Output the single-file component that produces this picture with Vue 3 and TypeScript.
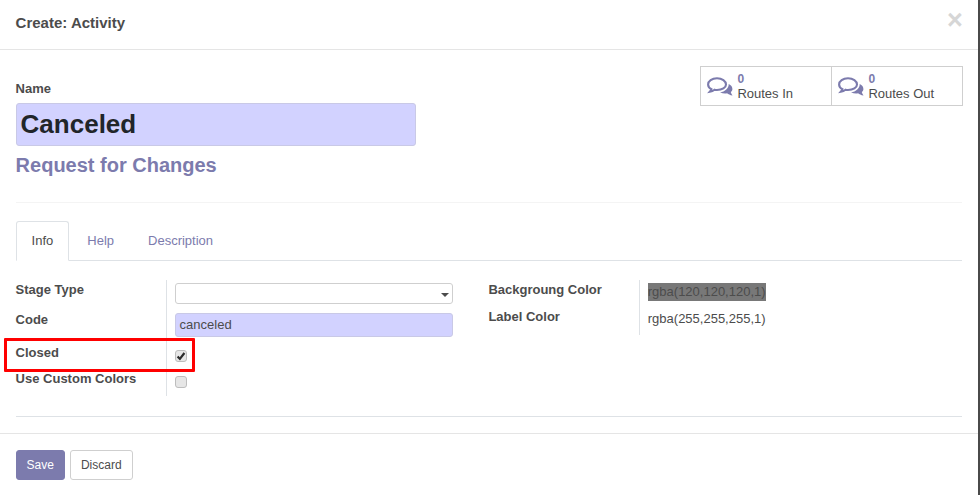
<script setup lang="ts">
const buttons = [
  { count: 0, label: 'Routes In' },
  { count: 0, label: 'Routes Out' },
]
const tabs = ['Info', 'Help', 'Description']
</script>

<template>
  <div class="modal">
    <header class="head">
      <h4>Create: Activity</h4>
      <span class="close">×</span>
    </header>
    <main class="body">
      <section class="title-area">
        <div class="title-left">
          <label class="name-label">Name</label>
          <div class="name-input">Canceled</div>
          <div class="subtitle">Request for Changes</div>
        </div>
        <div class="stat-box">
          <div v-for="b in buttons" :key="b.label" class="stat">
            <svg class="stat-icon" viewBox="0 0 26 20" width="26" height="20">
              <path d="M13 15.200c2.300 1.200 5 1.400 7.100 1 1.200 1 2.900 1.900 5.400 2.300-.8-1-1.500-2.200-1.700-3.400 1-.9 1.600-2 1.600-3.200 0-2.200-1.300-4-3.700-5 .2 4.200-3.700 7.800-8.700 8.300z" fill="#7c7bad" />
              <path d="M10 1.200C4.900 1.200 1.100 4 1.100 7.400c0 2 1.300 3.600 3.300 4.700-.3 1-.9 1.900-1.600 2.700 1.900-.3 3.400-1 4.700-2.100 .8.200 1.600.3 2.500.3 5.100 0 9-2.500 9-5.600 0-3.400-3.900-6.200-9-6.200z" fill="#fff" stroke="#7c7bad" stroke-width="2.100" />
            </svg>
            <div class="stat-text">
              <span class="count">{{ b.count }}</span>
              <span class="stat-label">{{ b.label }}</span>
            </div>
          </div>
        </div>
      </section>

      <div class="thin-rule"></div>

      <nav class="tabs">
        <span v-for="(t, i) in tabs" :key="t" class="tab" :class="{ active: i === 0 }">{{ t }}</span>
      </nav>

      <section class="fields">
        <div class="group group-left">
          <div class="labels">
            <div class="lbl l1">Stage Type</div>
            <div class="lbl l2">Code</div>
            <div class="lbl l3">Closed</div>
            <div class="lbl l4">Use Custom Colors</div>
          </div>
          <div class="values">
            <div class="select"><span class="caret"></span></div>
            <div class="code-input">canceled</div>
            <div class="check-row first"><span class="check checked">
              <svg viewBox="0 0 12 12" width="12" height="12"><path d="M2.600 6.400l2.300 2.500 4.500-5.900" fill="none" stroke="#2b2b2b" stroke-width="2.200" /></svg>
            </span></div>
            <div class="check-row"><span class="check"></span></div>
          </div>
        </div>
        <div class="group group-right">
          <div class="labels right-labels">
            <div class="lbl r1">Backgroung Color</div>
            <div class="lbl r2">Label Color</div>
          </div>
          <div class="values right-values">
            <div class="color-row"><span class="swatch">rgba(120,120,120,1)</span></div>
            <div class="color-row second">rgba(255,255,255,1)</div>
          </div>
        </div>
      </section>
      <div class="end-rule"></div>
    </main>
    <footer class="foot">
      <button class="btn primary">Save</button>
      <button class="btn">Discard</button>
    </footer>
    <div class="highlight"></div>
  </div>
</template>

<style>
html, body { margin: 0; background: #fff; }
</style>

<style scoped>
.modal {
  position: relative;
  width: 980px;
  height: 495px;
  box-sizing: border-box;
  border-right: 2px solid #4a4a4a;
  background: #fff;
  font-family: "Liberation Sans", Arial, sans-serif;
  font-size: 13px;
  color: #4c4c4c;
  overflow: hidden;
}
.head {
  height: 50px;
  box-sizing: border-box;
  border-bottom: 1px solid #e5e5e5;
  padding: 0 15.6px;
  display: flex;
  justify-content: space-between;
}
.head h4 {
  margin: 14px 0 0;
  font-size: 15px;
  line-height: 18px;
  font-weight: bold;
  color: #4c4c4c;
}
.close {
  position: absolute;
  left: 947px;
  top: 7px;
  font-size: 27px;
  line-height: 27px;
  font-weight: bold;
  color: #d6d6d6;
}
.body { padding: 16px 16px 0 15.6px; width: 946.4px; }
.title-area {
  display: flex;
  justify-content: space-between;
  height: 136px;
}
.title-left { padding-top: 15px; }
.name-label {
  display: block;
  font-weight: bold;
  line-height: 15px;
  height: 22px;
}
.name-input {
  width: 400px;
  height: 43px;
  box-sizing: border-box;
  border: 1px solid #c9c9e6;
  border-radius: 3px;
  background: #d2d2ff;
  padding-left: 4px;
  font-size: 26px;
  line-height: 40px;
  font-weight: bold;
  color: #212529;
}
.subtitle {
  margin-top: 8px;
  font-size: 20px;
  line-height: 23px;
  font-weight: bold;
  color: #7c7bad;
}
.stat-box {
  display: flex;
  width: 263px;
  height: 40px;
  margin-right: -1px;
  box-sizing: border-box;
  border: 1px solid #cfcfcf;
}
.stat {
  flex: 1;
  display: flex;
  align-items: center;
  gap: 4.4px;
  padding-left: 6px;
}
.stat + .stat { border-left: 1px solid #cfcfcf; }
.stat-icon { flex: none; margin-top: 1px; }
.stat-text { display: flex; flex-direction: column; margin-top: 0; }
.count { font-size: 12px; font-weight: bold; color: #7c7bad; line-height: 15px; }
.stat-label { font-size: 13px; line-height: 15px; margin-top: -1px; }
.thin-rule { height: 1px; background: #f4f4f4; }
.tabs {
  display: flex;
  margin-top: 18px;
  height: 39px;
  border-bottom: 1px solid #dee2e6;
}
.tab {
  padding: 0 15px;
  margin-right: 2px;
  line-height: 38px;
  height: 40px;
  box-sizing: border-box;
  border: 1px solid transparent;
  color: #7c7bad;
  font-size: 13px;
}
.tab.active {
  border-color: #dee2e6 #dee2e6 #fff;
  border-radius: 3px 3px 0 0;
  background: #fff;
  color: #4c4c4c;
}
.fields { display: flex; margin-top: 19px; }
.group { display: flex; }
.group-left { width: 472.8px; }
.labels { width: 150px; box-sizing: border-box; font-weight: bold; }
.lbl { line-height: 15px; }
.l1 { margin-top: 2px; }
.l2 { margin-top: 15px; }
.l3 { margin-top: 18px; }
.l4 { margin-top: 11px; }
.values {
  border-left: 1px solid #dee2e6;
  padding-left: 8px;
  width: 278px;
  height: 116px;
}
.select {
  position: relative;
  width: 278px;
  height: 21px;
  box-sizing: border-box;
  border: 1px solid #cfcfcf;
  border-radius: 3px;
  margin-top: 3px;
}
.caret {
  position: absolute;
  right: 3px;
  top: 9px;
  border: 4px solid transparent;
  border-top-color: #4c4c4c;
  border-bottom: 0;
}
.code-input {
  width: 278px;
  height: 24px;
  box-sizing: border-box;
  margin-top: 9px;
  border: 1px solid #c9c9e6;
  border-radius: 3px;
  background: #d2d2ff;
  padding-left: 4px;
  line-height: 22px;
}
.check-row { height: 12px; }
.check-row.first { margin-top: 13px; }
.check-row + .check-row { margin-top: 14px; }
.check {
  display: block;
  width: 12px;
  height: 12px;
  box-sizing: border-box;
  border: 1px solid #bdbdbd;
  border-radius: 3px;
  background: #e6e6e6;
  position: relative;
}
.check svg { position: absolute; left: -1px; top: -1px; }
.right-labels { width: 150.4px; }
.right-values {
  height: 55px;
  width: 200px;
}
.r1 { margin-top: 2px; }
.r2 { margin-top: 12px; }
.color-row { line-height: 18px; margin-top: 3px; height: 18px; }
.color-row.second { margin-top: 9px; }
.swatch { background: #787878; display: inline-block; }
.end-rule { height: 1px; background: #dee2e6; margin-top: 20px; }
.foot {
  position: absolute;
  left: 0;
  right: 0;
  top: 433px;
  border-top: 1px solid #e5e5e5;
  padding: 16px 16px 0 15.6px;
  display: flex;
  gap: 5px;
}
.btn {
  height: 30px;
  box-sizing: border-box;
  padding: 0 10px;
  border: 1px solid #cfcfcf;
  border-radius: 3px;
  background: #fff;
  color: #4c4c4c;
  font: 12px "Liberation Sans", Arial, sans-serif;
}
.btn.primary {
  background: #7c7bad;
  border-color: #7c7bad;
  color: #fff;
}
.highlight {
  position: absolute;
  left: 4px;
  top: 338px;
  width: 191px;
  height: 34px;
  box-sizing: border-box;
  border: 3px solid #f00;
  border-radius: 1px;
}
</style>
